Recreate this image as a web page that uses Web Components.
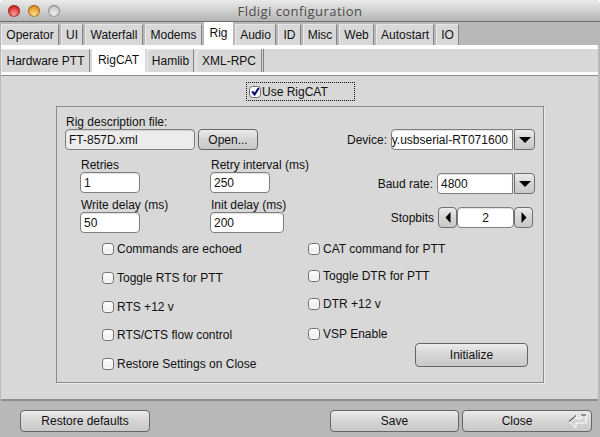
<!DOCTYPE html>
<html><head><meta charset="utf-8"><title>Fldigi configuration</title>
<style>
html,body{margin:0;padding:0;background:#fff;}
body{font:12px "Liberation Sans",Arial,sans-serif;color:#111;width:600px;height:437px;overflow:hidden;}
</style></head><body>
<fl-window>
  <fl-titlebar>Fldigi configuration</fl-titlebar>
  <fl-tabs>
    <fl-tab w="58">Operator</fl-tab><fl-tab w="22">UI</fl-tab><fl-tab w="58">Waterfall</fl-tab><fl-tab w="57">Modems</fl-tab><fl-tab w="29" active>Rig</fl-tab><fl-tab w="41">Audio</fl-tab><fl-tab w="23">ID</fl-tab><fl-tab w="34">Misc</fl-tab><fl-tab w="35">Web</fl-tab><fl-tab w="58">Autostart</fl-tab><fl-tab w="23">IO</fl-tab>
  </fl-tabs>
  <fl-panel>
    <fl-subtabs>
      <fl-tab sub w="89">Hardware PTT</fl-tab><fl-tab sub w="53" active>RigCAT</fl-tab><fl-tab sub w="47">Hamlib</fl-tab><fl-tab sub w="66">XML-RPC</fl-tab>
    </fl-subtabs>
    <fl-page>
      <fl-check focus checked>Use RigCAT</fl-check>
      <fl-group>
        <fl-rigform>
          <fl-field slot="file" label="Rig description file:" w="130" value="FT-857D.xml" readonly></fl-field>
          <fl-button slot="open" w="60" h="21">Open...</fl-button>
          <fl-field slot="retries" label="Retries" w="60" value="1"></fl-field>
          <fl-field slot="interval" label="Retry interval (ms)" w="60" value="250"></fl-field>
          <fl-field slot="write" label="Write delay (ms)" w="60" value="50"></fl-field>
          <fl-field slot="init" label="Init delay (ms)" w="74" value="200"></fl-field>
          <fl-choice slot="device" label="Device:" w="122" value="y.usbserial-RT071600" clip></fl-choice>
          <fl-choice slot="baud" label="Baud rate:" w="76" value="4800"></fl-choice>
          <fl-counter slot="stop" label="Stopbits" value="2"></fl-counter>
        </fl-rigform>
        <fl-checks>
          <div slot="left">
            <fl-check>Commands are echoed</fl-check>
            <fl-check gap="15">Toggle RTS for PTT</fl-check>
            <fl-check gap="15">RTS +12 v</fl-check>
            <fl-check gap="14">RTS/CTS flow control</fl-check>
            <fl-check gap="15">Restore Settings on Close</fl-check>
          </div>
          <div slot="right">
            <fl-check>CAT command for PTT</fl-check>
            <fl-check gap="13">Toggle DTR for PTT</fl-check>
            <fl-check gap="14">DTR +12 v</fl-check>
            <fl-check gap="16">VSP Enable</fl-check>
            <fl-button w="113" h="24" style="margin:2px 0 0 107px">Initialize</fl-button>
          </div>
        </fl-checks>
      </fl-group>
    </fl-page>
  </fl-panel>
  <fl-footer>
    <fl-button w="130" h="22">Restore defaults</fl-button>
    <span class="sp" style="flex:1"></span>
    <fl-button w="129" h="22">Save</fl-button>
    <fl-button w="130" h="22" return>Close</fl-button>
  </fl-footer>
</fl-window>
<script>
function def(name, css, html, init){
  customElements.define(name, class extends HTMLElement{
    constructor(){super();this.attachShadow({mode:'open'});}
    connectedCallback(){
      const a=n=>this.getAttribute(n);
      const h=typeof html==='function'?html(a,this):html;
      this.shadowRoot.innerHTML='<style>'+css+'</style>'+h;
      if(init)init(this,a);
    }
  });
}
const grad='linear-gradient(#ececec,#d6d6d6 45%,#c9c9c9)';
def('fl-window',':host{display:flex;flex-direction:column;width:600px;height:437px;background:#b8b8b8;border-radius:5px 5px 0 0;overflow:hidden}','<slot></slot>');
def('fl-titlebar',`:host{display:block;height:21px;flex:none;text-align:center;font:13px/22px "Open Sans","DejaVu Sans",sans-serif;letter-spacing:.45px;color:#4b4b4b;
  background:linear-gradient(#ebebeb,#d0d0d0 50%,#b4b4b4);border-bottom:1px solid #6e6e6e;position:relative}
  .l{position:absolute;top:5px;width:12px;height:12px;border-radius:50%;box-shadow:inset 0 0 0 1px rgba(0,0,0,.3)}`,
  `<i class="l" style="left:8px;background:radial-gradient(circle at 50% 75%,#f7a09a,#dc3a38 55%,#a8201f)"></i>
   <i class="l" style="left:28px;background:radial-gradient(circle at 50% 75%,#fbe08e,#ec9f34 55%,#b87516)"></i>
   <i class="l" style="left:48px;background:radial-gradient(circle at 50% 75%,#ececec,#cfcfcf 55%,#a9a9a9)"></i><slot></slot>`);
def('fl-tabs',':host{display:flex;flex:none;height:23px;padding:0 0 0 1px;gap:2px;align-items:flex-end}','<slot></slot>');
def('fl-tab',`:host{display:block;box-sizing:border-box;height:21px;line-height:20px;text-align:center;background:#d8d8d8;white-space:nowrap;
   border-top:1px solid #e6e6e6;border-left:1px solid #e9e9e9;border-right:1px solid #858585;flex:none;position:relative}
  :host([active]){background:#fff;border-color:#fff;height:24px;margin-bottom:-1px;line-height:21px;z-index:2;border-radius:1px 1px 0 0}
  :host([sub]){height:23px;line-height:22px}
  :host([sub][active]){height:27px;margin-bottom:-3px;line-height:22px;margin-top:-1px}`,
  '<slot></slot>',(e,a)=>{e.style.width=a('w')+'px';});
def('fl-panel',':host{display:flex;flex-direction:column;flex:1;margin:1px 2px 0 1px;min-height:0}','<slot></slot>');
def('fl-subtabs',`:host{display:flex;flex:none;height:23px;background:#d8d8d8;border-top:3px solid #fff;border-bottom:0;gap:2px;position:relative;box-shadow:0 -1px 0 #fff}
   .f{flex:1;border-left:1px solid #808080;margin-left:-1px}`,'<slot></slot><div class="f"></div>');
def('fl-page',`:host{display:block;flex:none;box-sizing:border-box;height:329px;background:#d8d8d8;border-top:3px solid #fff;box-shadow:inset 0 1px 0 #8a8a8a;border-bottom:2px solid #8d8d8d;padding-top:7px;position:relative}`,
  '<slot></slot>');
def('fl-group',`:host{display:block;box-sizing:border-box;margin:5px 0 0 55px;width:488px;height:277px;border:1px solid #8c8c8c;padding:8px 0 0 8px;box-shadow:1px 1px 0 #ececec}`,'<slot></slot>');
def('fl-rigform',`:host{display:block;position:relative;height:118px}
  .wrap{display:flex;height:118px}
  .lft{width:245px}
  .row{display:flex;align-items:flex-end}
  .f{display:grid;grid-template-columns:130px 1fr;margin:8px 0 0 15px;row-gap:5px}
  .rgt{width:227px;display:flex;flex-direction:column;align-items:flex-end;padding:14px 0 0 0}
  `,
  `<div class="wrap"><div class="lft">
     <div class="row"><slot name="file"></slot><span style="width:3px"></span><slot name="open"></slot></div>
     <div class="f"><slot name="retries"></slot><slot name="interval"></slot><slot name="write"></slot><slot name="init"></slot></div>
   </div><div class="rgt">
     <slot name="device"></slot><div style="height:23px"></div><slot name="baud"></slot><div style="height:13px"></div><slot name="stop"></slot>
   </div></div>`);
const inputCss=`.in{box-sizing:border-box;height:21px;border:1px solid #7f7f7f;border-radius:4px;background:#fff;padding:0 3px;line-height:20px;white-space:nowrap;overflow:hidden;box-shadow:inset 0 1px 1px rgba(0,0,0,.12)}`;
def('fl-field',`:host{display:block}.lb{height:14px;line-height:14px;padding-left:1px;white-space:nowrap;margin-bottom:0}
  ${inputCss}.in.ro{background:#ececec}`,
  (a)=>`<div class="lb">${a('label')}</div><div class="in ${a('readonly')!==null?'ro':''}" style="width:${a('w')}px">${a('value')}</div>`);
const arrowBtn=(dir)=>{
  const p={down:'M0 0H12L6 6Z',left:'M5.5 0V11L0.5 5.5Z',right:'M0.5 0V11L5.5 5.5Z'}[dir];
  const vb=dir==='down'?'0 0 12 6':'0 0 6 11';
  const s=dir==='down'?'width="12" height="6"':'width="6" height="11"';
  return `<svg ${s} viewBox="${vb}"><path d="${p}" fill="#000"/></svg>`;
};
const btnCss=`.b{box-sizing:border-box;display:flex;align-items:center;justify-content:center;height:21px;border:1px solid #6f6f6f;border-radius:4px;background:${grad}}`;
def('fl-choice',`:host{display:flex;align-items:center;white-space:nowrap}.lb{margin-right:4px}
  ${inputCss}${btnCss}.in{border-radius:4px 0 0 4px;margin-right:1px}.b{width:21px;border-radius:0 4px 4px 0;margin-right:2px}
  .in.clip{padding:0 4px 0 0;direction:rtl;text-align:left}`,
  (a)=>`<span class="lb">${a('label')}</span><div class="in ${a('clip')!==null?'clip':''}" style="width:${a('w')}px"><span dir="ltr">${a('value')}</span></div><div class="b">${arrowBtn('down')}</div>`);
def('fl-counter',`:host{display:flex;align-items:center;white-space:nowrap;margin-right:4px}.lb{margin-right:4px}
  ${inputCss}${btnCss}.in{width:57px;text-align:center;border-radius:4px}.b{width:19px}`,
  (a)=>`<span class="lb">${a('label')}</span><div class="b">${arrowBtn('left')}</div><div class="in">${a('value')}</div><div class="b">${arrowBtn('right')}</div>`);
def('fl-button',`:host{display:inline-flex;position:relative;flex:none}
  .b{box-sizing:border-box;display:flex;align-items:center;justify-content:center;width:100%;border:1px solid #666;border-radius:4px;background:${grad}}
  .b.ret{padding-right:20px}
  svg{position:absolute;right:5px;top:4px}`,
  (a,e)=>{e.style.width=a('w')+'px';const r=a('return')!==null;return `<div class="b ${r?'ret':''}" style="height:${a('h')}px"><slot></slot></div>`+(r?`<svg width="19" height="15" viewBox="0 0 19 15"><path d="M8 1.5V4.5H13V1H18V9H8V14L1 7.5" fill="none" stroke="#fff"/><path d="M1 7.5 8 1.5M13 1H18" fill="none" stroke="#333"/></svg>`:'');});
def('fl-check',`:host{display:flex;align-items:center;height:14px;white-space:nowrap}
  .c{box-sizing:border-box;width:12px;height:12px;border:1px solid #6f6f6f;border-radius:3.5px;background:linear-gradient(#fff,#f0f0f0 70%,#fafafa);margin-right:3px;flex:none;display:flex;align-items:center;justify-content:center}
  :host([focus]){box-sizing:border-box;height:19px;width:109px;margin-left:245px;border:1px dotted #111;padding-left:2px;margin-bottom:0}
  :host([focus]) .c{margin-right:1px}`,
  (a,e)=>{if(a('gap'))e.style.marginTop=a('gap')+'px';return `<span class="c">${a('checked')!==null?'<svg width="9" height="9" viewBox="0 0 9 9"><path d="M1.2 4.5 3.6 7.4 7.8 1" fill="none" stroke="#06066e" stroke-width="2"/></svg>':''}</span><slot></slot>`;});
def('fl-checks',`:host{display:flex;margin-top:9px;padding-left:37px}
  ::slotted([slot=left]){width:206px}`,'<slot name="left"></slot><slot name="right"></slot>');
def('fl-footer',`:host{display:flex;flex:none;height:35px;box-sizing:border-box;padding:8px 8px 0 20px;gap:3px}`,'<slot></slot>');
</script>
</body></html>
